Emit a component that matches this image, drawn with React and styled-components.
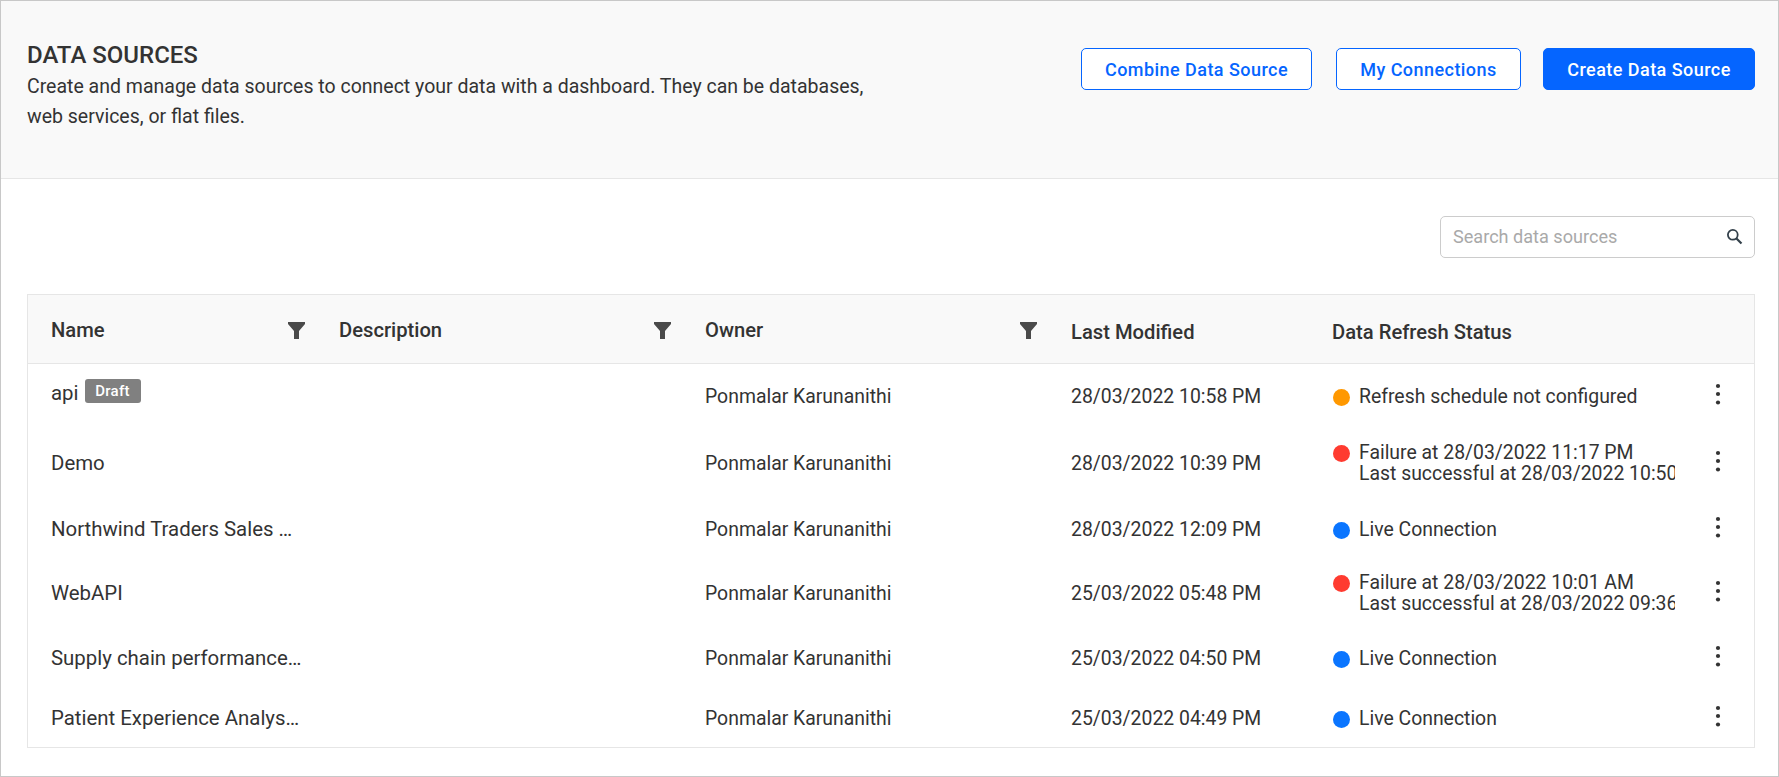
import React from "react";
import styled, { createGlobalStyle } from "styled-components";

const GlobalStyle = createGlobalStyle`
  html, body {
    margin: 0;
    padding: 0;
    background: #fff;
  }
  * {
    box-sizing: border-box;
  }
`;

const COLUMNS = "288px 366px 366px 261px 1fr";

const Page = styled.div`
  width: 1779px;
  height: 777px;
  border: 1px solid #c8c8c8;
  font-family: Roboto, sans-serif;
  color: #333;
  overflow: hidden;
`;

const Banner = styled.header`
  height: 178px;
  padding: 42px 23px 0 26px;
  background: #f9f9f9;
  border-bottom: 1px solid #e6e6e6;
  display: flex;
  justify-content: space-between;
  align-items: flex-start;
`;

const Title = styled.h1`
  margin: 0 0 5px;
  font-size: 24px;
  line-height: 24px;
  font-weight: 500;
`;

const Intro = styled.p`
  margin: 0;
  width: 860px;
  font-size: 19.5px;
  line-height: 30px;
`;

const Actions = styled.div`
  display: flex;
  gap: 22px;
  margin-top: 5px;
`;

const Button = styled.button`
  height: 42px;
  width: ${(p) => p.$width}px;
  margin-right: ${(p) => p.$extra || 0}px;
  padding: 0;
  border: 1px solid #0565ff;
  border-radius: 5px;
  background: ${(p) => (p.$primary ? "#0565ff" : "#fff")};
  color: ${(p) => (p.$primary ? "#fff" : "#0565ff")};
  font-family: inherit;
  font-size: 18px;
  font-weight: 500;
  letter-spacing: 0.45px;
`;

const Content = styled.main`
  padding: 37px 23px 0 26px;
`;

const Toolbar = styled.div`
  display: flex;
  justify-content: flex-end;
  margin-bottom: 36px;
`;

const SearchBox = styled.label`
  width: 315px;
  height: 42px;
  padding: 0 11px 1px 12px;
  border: 1px solid #ccc;
  border-radius: 5px;
  display: flex;
  align-items: center;
  justify-content: space-between;
`;

const SearchInput = styled.input`
  flex: 1;
  min-width: 0;
  border: 0;
  outline: 0;
  padding: 0;
  background: transparent;
  font-family: inherit;
  font-size: 18.1px;
  color: #333;
  &::placeholder {
    color: #a9a9a9;
    opacity: 1;
  }
`;

const Table = styled.section`
  border: 1px solid #e6e6e6;
  height: 454px;
`;

const HeadRow = styled.div`
  display: grid;
  grid-template-columns: ${COLUMNS};
  height: 69px;
  background: #f9f9f9;
  border-bottom: 1px solid #e6e6e6;
`;

const HeadCell = styled.div`
  display: flex;
  align-items: center;
  justify-content: space-between;
  padding: ${(p) => (p.$filter ? 1 : 6)}px 11px 0 23px;
  font-size: 20.2px;
  font-weight: 500;
`;

const Funnel = styled.svg`
  display: block;
  margin-top: 2px;
`;

const Row = styled.div`
  display: grid;
  grid-template-columns: ${COLUMNS};
  height: ${(p) => p.$height}px;
  font-size: 19.4px;
  line-height: 21px;
`;

const Cell = styled.div`
  display: flex;
  align-items: center;
  min-width: 0;
  padding-left: 23px;
`;

const NameCell = styled(Cell)`
  padding-bottom: ${(p) => (p.$raised ? 7 : 0)}px;
  font-size: 20.4px;
  line-height: 24px;
`;

const Name = styled.span`
  max-width: 251px;
  white-space: nowrap;
  overflow: hidden;
  text-overflow: ellipsis;
`;

const Badge = styled.span`
  margin: 0 0 5px 6px;
  width: 56px;
  height: 24px;
  border-radius: 3px;
  background: #808080;
  color: #fff;
  font-size: 15px;
  font-weight: 500;
  letter-spacing: 0.3px;
  display: flex;
  align-items: center;
  justify-content: center;
`;

const StatusCell = styled(Cell)`
  justify-content: space-between;
  padding-left: 24px;
  padding-right: 33px;
`;

const Status = styled.div`
  display: flex;
  align-items: flex-start;
  gap: 9px;
`;

const Dot = styled.span`
  flex: none;
  width: 17px;
  height: 17px;
  margin-top: 3px;
  border-radius: 50%;
  background: ${(p) => p.$color};
`;

const StatusText = styled.div`
  width: 316px;
  white-space: nowrap;
  overflow: hidden;
`;

const Kebab = styled.svg`
  display: block;
  margin-bottom: 5px;
`;

const FunnelIcon = () => (
  <Funnel width="17" height="17" viewBox="0 0 17 17" fill="#4a4a4a">
    <path d="M0 0h17v2L11 9v8H6V9L0 2z" />
  </Funnel>
);

const SearchIcon = () => (
  <svg width="17" height="17" viewBox="0 0 17 17" fill="none" stroke="#33404a">
    <circle cx="6.8" cy="6.8" r="4.9" strokeWidth="1.8" />
    <path d="M10.5 10.5L15.5 15.5" strokeWidth="2.2" />
  </svg>
);

const MoreIcon = () => (
  <Kebab width="6" height="22" viewBox="0 0 6 22" fill="#333">
    <circle cx="3" cy="3" r="2.1" />
    <circle cx="3" cy="11" r="2.1" />
    <circle cx="3" cy="19.5" r="2.1" />
  </Kebab>
);

const ORANGE = "#ff9800";
const RED = "#ff3b30";
const BLUE = "#0a75ff";
const OWNER = "Ponmalar Karunanithi";

const rows = [
  { name: "api", draft: true, date: "28/03/2022 10:58 PM", color: ORANGE, height: 65, status: ["Refresh schedule not configured"] },
  { name: "Demo", date: "28/03/2022 10:39 PM", color: RED, height: 68, status: ["Failure at 28/03/2022 11:17 PM", "Last successful at 28/03/2022 10:50 PM"] },
  { name: "Northwind Traders Sales Analysis", date: "28/03/2022 12:09 PM", color: BLUE, height: 64, status: ["Live Connection"] },
  { name: "WebAPI", date: "25/03/2022 05:48 PM", color: RED, height: 64, status: ["Failure at 28/03/2022 10:01 AM", "Last successful at 28/03/2022 09:36 AM"] },
  { name: "Supply chain performance analysis", date: "25/03/2022 04:50 PM", color: BLUE, height: 66, status: ["Live Connection"] },
  { name: "Patient Experience Analysis Report", date: "25/03/2022 04:49 PM", color: BLUE, height: 54, status: ["Live Connection"] },
];

export default function App() {
  return (
    <Page>
      <GlobalStyle />
      <Banner>
        <div>
          <Title>DATA SOURCES</Title>
          <Intro>
            Create and manage data sources to connect your data with a dashboard. They can be
            databases, web services, or flat files.
          </Intro>
        </div>
        <Actions>
          <Button $width={231} $extra={2}>Combine Data Source</Button>
          <Button $width={185}>My Connections</Button>
          <Button $width={212} $primary>Create Data Source</Button>
        </Actions>
      </Banner>
      <Content>
        <Toolbar>
          <SearchBox>
            <SearchInput placeholder="Search data sources" />
            <SearchIcon />
          </SearchBox>
        </Toolbar>
        <Table>
          <HeadRow>
            <HeadCell $filter>Name<FunnelIcon /></HeadCell>
            <HeadCell $filter>Description<FunnelIcon /></HeadCell>
            <HeadCell $filter>Owner<FunnelIcon /></HeadCell>
            <HeadCell>Last Modified</HeadCell>
            <HeadCell>Data Refresh Status</HeadCell>
          </HeadRow>
          {rows.map((row) => (
            <Row key={row.name} $height={row.height}>
              <NameCell $raised={row.draft}>
                <Name>{row.name}</Name>
                {row.draft && <Badge>Draft</Badge>}
              </NameCell>
              <Cell />
              <Cell>{OWNER}</Cell>
              <Cell>{row.date}</Cell>
              <StatusCell>
                <Status>
                  <Dot $color={row.color} />
                  <StatusText>
                    {row.status.map((line) => (
                      <div key={line}>{line}</div>
                    ))}
                  </StatusText>
                </Status>
                <MoreIcon />
              </StatusCell>
            </Row>
          ))}
        </Table>
      </Content>
    </Page>
  );
}
